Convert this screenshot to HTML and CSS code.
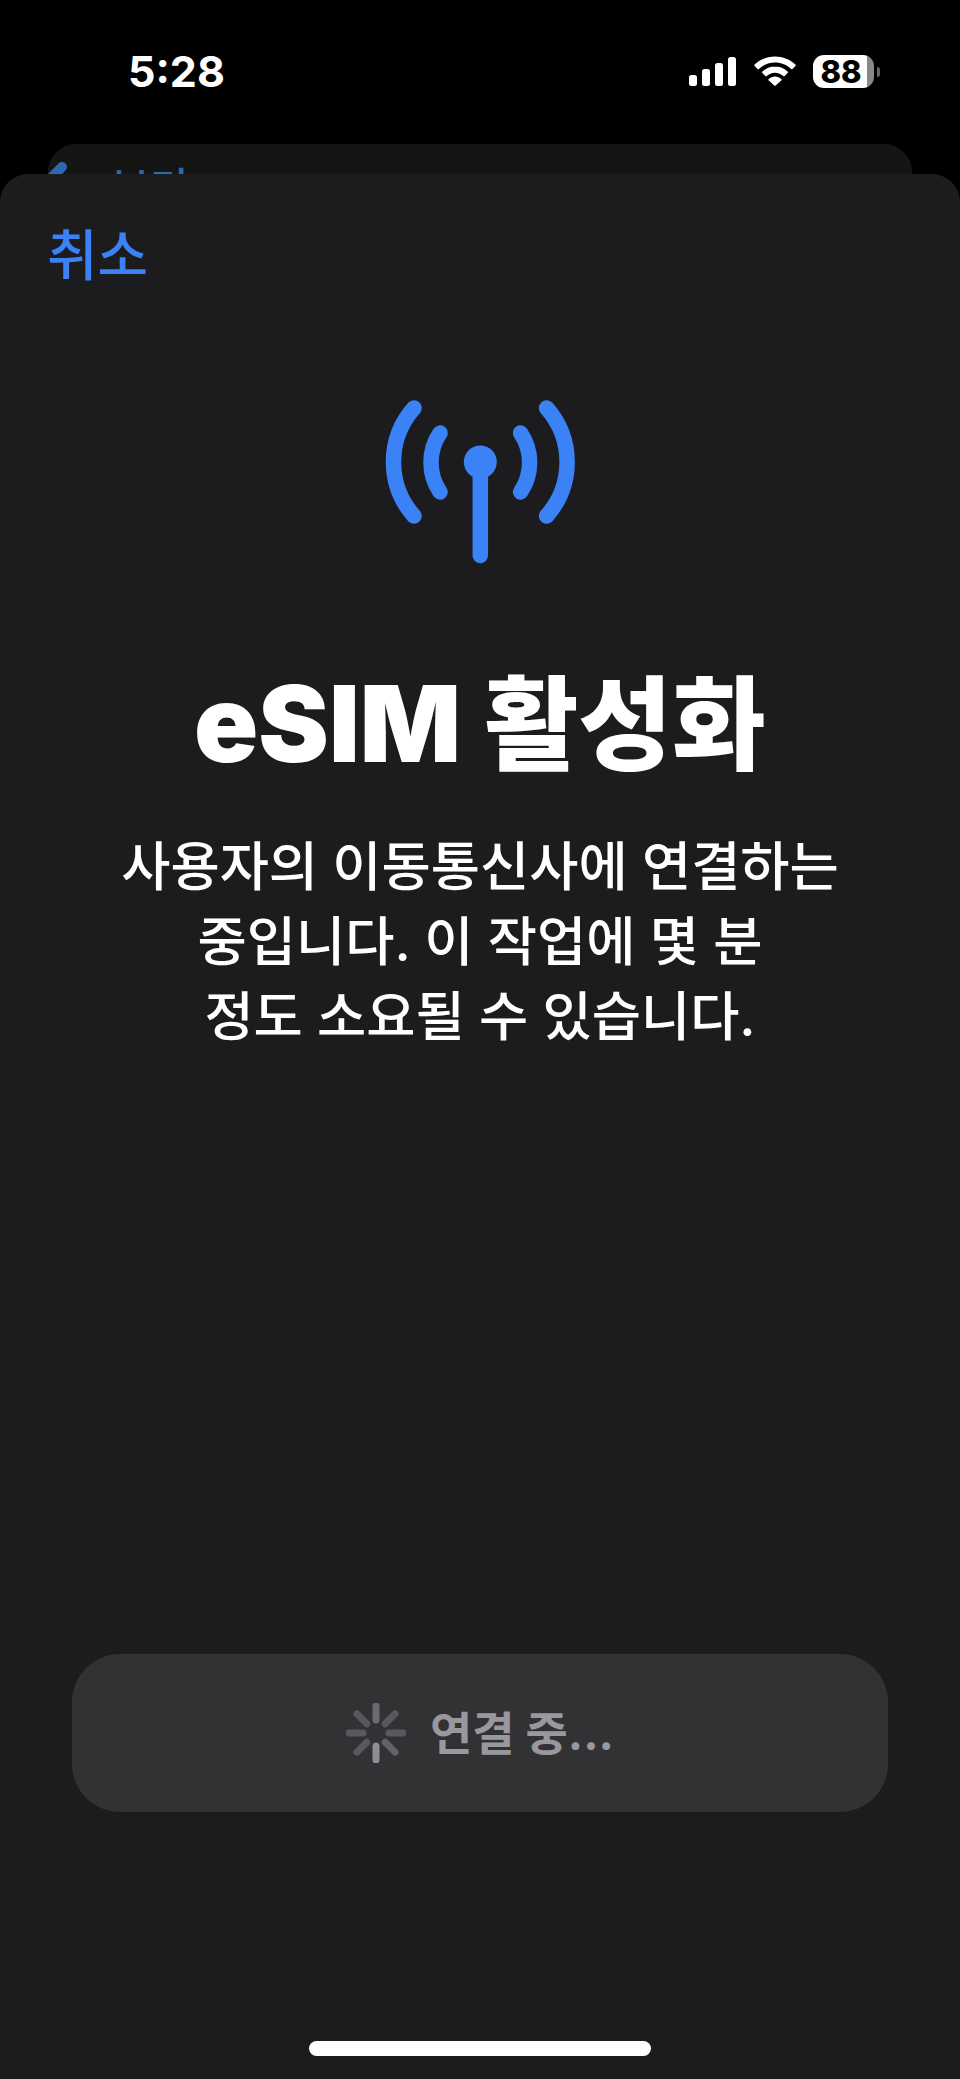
FILE: index.html
```html
<!DOCTYPE html>
<html lang="ko">

<head>
    <meta charset="utf-8">
    <meta name="viewport" content="width=device-width, initial-scale=1">
    <title>eSIM 활성화</title>
    <link rel="stylesheet" href="styles.css">
</head>

<body>
    <div class="status-bar">
        <div class="status-time">5:28</div>
        <div class="status-icons">
            <svg class="icon-signal" width="48" height="30" viewBox="0 0 48 30">
                <rect x="0" y="18" width="8" height="11" rx="2.5"></rect>
                <rect x="13" y="12" width="8" height="17" rx="2.5"></rect>
                <rect x="26" y="6" width="8" height="23" rx="2.5"></rect>
                <rect x="39" y="0" width="8" height="29" rx="2.5"></rect>
            </svg>
            <svg class="icon-wifi" width="42" height="30" viewBox="0 0 42 30">
                <path d="M21 0.5C13 0.5 6 3.6 0.6 8.6a1 1 0 0 0 0 1.4l2.9 3a1 1 0 0 0 1.4 0C9.1 9 14.8 6.6 21 6.6s11.9 2.4 16.1 6.4a1 1 0 0 0 1.4 0l2.9-3a1 1 0 0 0 0-1.4C36 3.6 29 0.5 21 0.5z"></path>
                <path d="M21 10.6c-4.9 0-9.3 1.9-12.6 5a1 1 0 0 0 0 1.4l2.9 3a1 1 0 0 0 1.4 0c2.2-2 5.1-3.3 8.3-3.3s6.1 1.3 8.3 3.3a1 1 0 0 0 1.4 0l2.9-3a1 1 0 0 0 0-1.4c-3.3-3.1-7.7-5-12.6-5z"></path>
                <path d="M21 20.6c-2.4 0-4.6 0.9-6.3 2.5a1 1 0 0 0 0 1.4l5.6 5.1a1 1 0 0 0 1.4 0l5.6-5.1a1 1 0 0 0 0-1.4c-1.7-1.6-3.9-2.5-6.3-2.5z"></path>
            </svg>
            <div class="battery">
                <div class="battery-body">88</div>
                <div class="battery-nub"></div>
            </div>
        </div>
    </div>

    <div class="back-card">
        <svg class="back-chevron" width="24" height="40" viewBox="0 0 24 40">
            <path d="M14 13L2 25"></path>
        </svg>
        <span class="back-label">보기</span>
    </div>

    <div class="sheet">
        <div class="sheet-cancel">취소</div>

        <svg class="sheet-icon" width="240" height="200" viewBox="0 0 240 200">
            <path class="icon-stroke" d="M54 28A81.4 81.4 0 0 0 54 136"></path>
            <path class="icon-stroke" d="M80 53A52.8 52.8 0 0 0 80 112"></path>
            <path class="icon-stroke" d="M186.6 28A81.4 81.4 0 0 1 186.6 136"></path>
            <path class="icon-stroke" d="M160.6 53A52.8 52.8 0 0 1 160.6 112"></path>
            <path class="icon-stroke" d="M120.3 90V175.5"></path>
            <circle class="icon-dot" cx="120.3" cy="82" r="16.5"></circle>
        </svg>

        <h1 class="sheet-title"><span class="title-latin">eSIM</span> 활성화</h1>
        <p class="sheet-text">사용자의 이동통신사에 연결하는<br>중입니다. 이 작업에 몇 분<br>정도 소요될 수 있습니다.</p>

        <div class="sheet-button">
            <svg class="spinner" width="60" height="60" viewBox="0 0 60 60">
                <line x1="30" y1="3" x2="30" y2="17" stroke="#6b6b70"></line>
                <line x1="49.1" y1="10.9" x2="39.2" y2="20.8" stroke="#59595d"></line>
                <line x1="57" y1="30" x2="43" y2="30" stroke="#59595d"></line>
                <line x1="49.1" y1="49.1" x2="39.2" y2="39.2" stroke="#636367"></line>
                <line x1="30" y1="57" x2="30" y2="43" stroke="#8e8e93"></line>
                <line x1="10.9" y1="49.1" x2="20.8" y2="39.2" stroke="#59595d"></line>
                <line x1="3" y1="30" x2="17" y2="30" stroke="#59595d"></line>
                <line x1="10.9" y1="10.9" x2="20.8" y2="20.8" stroke="#59595d"></line>
            </svg>
            <span class="button-label">연결 중...</span>
        </div>

        <div class="home-indicator"></div>
    </div>
</body>

</html>
```

FILE: styles.css
```css
html,
body {
    margin: 0;
    padding: 0;
    background: #000;
    font-family: Inter, "Noto Sans CJK KR", sans-serif;
}

body {
    width: 960px;
    height: 2079px;
    overflow: hidden;
}

.status-bar {
    height: 144px;
    box-sizing: border-box;
    padding: 50px 80px 0 128px;
    display: flex;
    justify-content: space-between;
    align-items: flex-start;
    color: #fff;
}

.status-time {
    font-size: 43px;
    line-height: 42px;
    font-weight: 700;
}

.status-icons {
    display: flex;
    align-items: flex-start;
    padding-top: 5px;
}

.icon-signal {
    margin: 2px 17px 0 0;
    fill: #fff;
}

.icon-wifi {
    margin: 1px 17px 0 0;
    fill: #fff;
}

.battery {
    display: flex;
    align-items: center;
}

.battery-body {
    width: 61px;
    height: 33px;
    border-radius: 11px;
    background: linear-gradient(to right, #fff 88%, #888 88%);
    color: #000;
    font-size: 31px;
    line-height: 33px;
    font-weight: 800;
    text-align: center;
    padding-right: 5px;
    box-sizing: border-box;
}

.battery-nub {
    width: 3px;
    height: 10px;
    margin-left: 3px;
    border-radius: 0 3px 3px 0;
    background: #666;
}

.back-card {
    height: 30px;
    margin: 0 48px;
    background: #141614;
    border-radius: 28px 28px 0 0;
    overflow: hidden;
    display: flex;
    align-items: flex-start;
}

.back-chevron {
    flex: none;
    margin-top: 10px;
}

.back-chevron path {
    fill: none;
    stroke: #2f67b3;
    stroke-width: 10;
    stroke-linecap: round;
}

.back-label {
    margin: 14px 0 0 39px;
    color: #2f67b3;
    font-size: 42px;
    line-height: 60px;
    font-weight: 500;
}

.sheet {
    height: 1905px;
    box-sizing: border-box;
    background: #1c1c1e;
    border-radius: 28px 28px 0 0;
    display: flex;
    flex-direction: column;
    align-items: center;
}

.sheet-cancel {
    align-self: flex-start;
    margin: 46px 0 0 47px;
    color: #3a82f6;
    font-size: 55px;
    line-height: 70px;
    font-weight: 500;
}

.sheet-icon {
    margin-top: 90px;
    flex: none;
}

.icon-stroke {
    fill: none;
    stroke: #3a82f6;
    stroke-width: 15.5;
    stroke-linecap: round;
}

.icon-dot {
    fill: #3a82f6;
}

.sheet-title {
    margin: 84px 0 0;
    color: #fff;
    font-size: 102px;
    line-height: 120px;
    font-weight: 900;
}

.title-latin {
    font-size: 106px;
    margin-right: 3px;
}

.sheet-text {
    margin: 44px 0 0;
    color: #fff;
    font-size: 53.5px;
    line-height: 75px;
    font-weight: 500;
    text-align: center;
}

.sheet-button {
    width: 816px;
    height: 158px;
    margin-top: 600px;
    flex: none;
    background: #323234;
    border-radius: 48px;
    display: flex;
    align-items: center;
    justify-content: center;
    gap: 24px;
}

.spinner line {
    stroke-width: 7;
    stroke-linecap: round;
}

.button-label {
    color: #98989e;
    font-size: 46px;
    line-height: 60px;
    font-weight: 700;
}

.home-indicator {
    width: 342px;
    height: 15px;
    margin-top: 229px;
    flex: none;
    background: #fff;
    border-radius: 8px;
}
```
